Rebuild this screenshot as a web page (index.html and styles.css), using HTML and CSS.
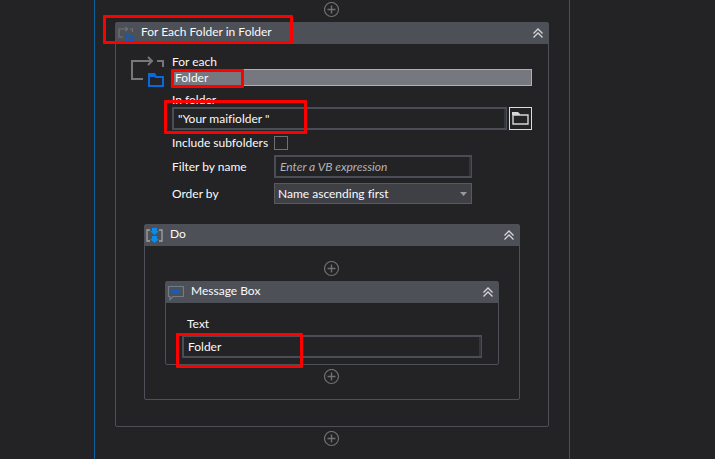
FILE: index.html
```html
<!DOCTYPE html>
<html lang="en">
<head>
  <meta charset="UTF-8" />
  <meta name="viewport" content="width=device-width, initial-scale=1.0"/>
  <title>For Each Folder in Folder</title>
  <link rel="stylesheet" href="styles.css">
</head>
<body>

  <!-- shared icons -->
  <svg class="sprite" aria-hidden="true">
    <symbol id="plus" viewBox="0 0 16 16">
      <circle cx="7.500" cy="7.500" r="7" fill="none" stroke="#707072" stroke-width="1.2"/>
      <path d="M7.500 3.500v8M3.500 7.500h8" stroke="#707072" stroke-width="1.4"/>
    </symbol>
    <symbol id="collapse" viewBox="0 0 10 10">
      <path d="M0.5 5.5L5 1l4.500 4.500M0.500 9.500L5 5l4.500 4.500" fill="none" stroke="#d4d5d8" stroke-width="1.3"/>
    </symbol>
    <symbol id="foreach" viewBox="0 0 33 32">
      <path d="M12 23H1V5h20M17 1l4 4-4 4M26 5h6v6" fill="none" stroke="#77777a" stroke-width="2"/>
      <path d="M18 30V18h5l2 3h7v9z" fill="none" stroke="#0a68dc" stroke-width="2"/>
      <path d="M17 17h7l2 4h-9z" fill="#0a68dc"/>
    </symbol>
  </svg>

  <main class="sequence">
    <button class="add" aria-label="Add activity"><svg><use href="#plus"/></svg></button>

    <section class="card">
      <header class="card-header marked">
        <svg class="icon" viewBox="0 0 17 17">
          <path d="M6 12H2V4h8M8.500 2l2 2-2 2M13 4h2.500v3" fill="none" stroke="#707276" stroke-width="1.200"/>
          <path d="M9 15.500v-5.500h2.500l1 1.500H16v4z" fill="none" stroke="#0a5cc4" stroke-width="1.400"/>
        </svg>
        <h1 class="title">For Each Folder in Folder</h1>
        <button class="collapse" aria-label="Collapse"><svg><use href="#collapse"/></svg></button>
        <span class="mark mark-title"></span>
      </header>

      <div class="settings">
        <svg class="big-icon"><use href="#foreach"/></svg>
        <form class="fields">
          <label for="item">For each</label>
          <div class="item-row marked">
            <input class="item" id="item" type="text" value="Folder">
            <span class="mark mark-item"></span>
          </div>

          <label class="folder-label" for="folder">In folder</label>
          <div class="folder-row marked">
            <input class="expression" id="folder" type="text" value='"Your maifiolder "'>
            <button class="browse" type="button" aria-label="Browse">
              <svg viewBox="0 0 17 13">
                <path d="M1 12V3h15v9z" fill="none" stroke="#d6d6d6" stroke-width="1.400"/>
                <path d="M0 0h6l2 2v1H0z" fill="#d6d6d6"/>
              </svg>
            </button>
            <span class="mark mark-folder"></span>
          </div>

          <div class="options">
            <label for="subfolders">Include subfolders</label>
            <input class="check" id="subfolders" type="checkbox">
            <label for="filter">Filter by name</label>
            <input class="expression" id="filter" type="text" placeholder="Enter a VB expression">
            <label for="order">Order by</label>
            <div class="select-wrap">
              <select class="order" id="order">
                <option>Name ascending first</option>
                <option>Name descending first</option>
              </select>
              <svg class="arrow" viewBox="0 0 7 4"><path d="M0 0h7L3.500 4z" fill="#9a9a9e"/></svg>
            </div>
          </div>
        </form>
      </div>

      <section class="card card-do">
        <header class="card-header">
          <svg class="icon" viewBox="0 0 17 17">
            <path d="M4 3H1v11h3M13 3h3v11h-3" fill="none" stroke="#a0a2a6" stroke-width="1.300"/>
            <path d="M6 1h5v3h2L8.500 8 4 4h2zM6 9h5v3h2l-4.500 4L4 12h2z" fill="#0c8ce9"/>
          </svg>
          <h2 class="title">Do</h2>
          <button class="collapse" aria-label="Collapse"><svg><use href="#collapse"/></svg></button>
        </header>
        <div class="do-body">
          <button class="add" aria-label="Add activity"><svg><use href="#plus"/></svg></button>

          <section class="card card-message">
            <header class="card-header">
              <svg class="icon" viewBox="0 0 17 17">
                <path d="M1.500 2.500h15v10H6l-3 3v-3H1.500z" fill="none" stroke="#6f7d88" stroke-width="1.200"/>
                <path d="M4 5h9v4H4z" fill="#1a5cb4"/>
              </svg>
              <h2 class="title">Message Box</h2>
              <button class="collapse" aria-label="Collapse"><svg><use href="#collapse"/></svg></button>
            </header>
            <div class="message-body">
              <label class="text-label" for="text">Text</label>
              <div class="text-row marked">
                <input class="expression" id="text" type="text" value="Folder">
                <span class="mark mark-text"></span>
              </div>
            </div>
          </section>

          <button class="add" aria-label="Add activity"><svg><use href="#plus"/></svg></button>
        </div>
      </section>
    </section>

    <button class="add" aria-label="Add activity"><svg><use href="#plus"/></svg></button>
  </main>

</body>
</html>
```
FILE: styles.css
```css
* {
  box-sizing: border-box;
}

body {
  margin: 0;
  background-color: #232325;
  color: #fafafa;
  font-family: 'Segoe UI', 'Lato', sans-serif;
  font-size: 12px;
  font-variant-ligatures: none;
  line-height: 15px;
}

input,
select,
button {
  margin: 0;
  color: inherit;
  font: inherit;
  font-variant-ligatures: none;
}

svg {
  display: block;
}

label {
  white-space: nowrap;
}

.sprite {
  display: none;
}

.sequence {
  display: flex;
  flex-direction: column;
  align-items: center;
  gap: 4px;
  min-height: 100vh;
  margin: 0 145px 0 94px;
  padding: 2px 20px;
  border-left: 1px solid #0b629f;
  border-right: 1px solid #0b629f;
}

.add {
  width: 16px;
  height: 16px;
  padding: 0;
  border: none;
  background: none;
  cursor: pointer;
}

.add svg {
  width: 16px;
  height: 16px;
}

.card {
  width: 100%;
  border: 1px solid #4d5057;
  border-radius: 2px;
}

.card-header {
  display: flex;
  align-items: center;
  height: 21px;
  padding: 0 5px 1px 1px;
  background-color: #4d5057;
}

.icon {
  flex: none;
  width: 17px;
  height: 17px;
}

.title {
  flex: 1;
  margin: 0 0 0 7px;
  padding-bottom: 3px;
  font-size: 12px;
  font-weight: normal;
}

.collapse {
  padding: 0;
  border: none;
  background: none;
  cursor: pointer;
}

.collapse svg {
  width: 10px;
  height: 10px;
}

.settings {
  display: flex;
  gap: 8px;
  padding: 10px 16px 20px 15px;
}

.big-icon {
  flex: none;
  width: 33px;
  height: 32px;
  margin-top: 2px;
}

.fields {
  flex: 1;
  display: flex;
  flex-direction: column;
}

.item-row,
.folder-row,
.text-row {
  display: flex;
  gap: 2px;
}

.item {
  width: 100%;
  height: 17px;
  padding: 0 2px;
  border: 1px solid #b0b0b4;
  background-color: #777780;
}

.folder-label {
  margin-top: 6px;
}

.expression {
  flex: 1;
  min-width: 0;
  height: 23px;
  padding: 0 4px;
  border: 2px solid #4a4d55;
  border-right-width: 1px;
  background-color: #232325;
  box-shadow: inset -2px 0 #34363b;
}

.expression::placeholder {
  color: #b4b4b4;
  font-style: italic;
}

.browse {
  display: flex;
  align-items: center;
  justify-content: center;
  width: 23px;
  height: 23px;
  padding: 0;
  border: 1px solid #dcdcde;
  background: none;
}

.browse svg {
  width: 17px;
  height: 13px;
}

.options {
  display: grid;
  grid-template-columns: 102px minmax(0, 198px);
  row-gap: 5px;
  align-items: center;
  margin-top: 5px;
}

.check {
  appearance: none;
  width: 14px;
  height: 14px;
  border: 1px solid #707072;
}

.select-wrap {
  position: relative;
}

.order {
  appearance: none;
  display: block;
  width: 100%;
  height: 21px;
  padding: 0 3px;
  border: 1px solid #5a5a5e;
  border-radius: 0;
  background-color: #3f3f46;
}

.arrow {
  position: absolute;
  top: 9px;
  right: 5px;
  width: 7px;
  height: 4px;
  pointer-events: none;
}

.card-do {
  width: auto;
  margin: 0 28px 26px;
}

.do-body {
  display: flex;
  flex-direction: column;
  align-items: center;
  gap: 4px;
  padding: 15px 20px 14px;
}

.message-body {
  padding: 13px 16px 6px;
}

.text-label {
  display: block;
  padding: 0 5px 4px;
}

/* red highlight boxes */
.marked {
  position: relative;
}

.mark {
  position: absolute;
  border: 3px solid #fe0000;
  border-radius: 1px;
  pointer-events: none;
}

.mark-title {
  top: -8px;
  left: -13px;
  width: 190px;
  height: 29px;
}

.mark-item {
  top: 0;
  left: -1px;
  width: 73px;
  height: 19px;
}

.mark-folder {
  top: -7px;
  left: -8px;
  width: 143px;
  height: 34px;
}

.mark-text {
  top: -2px;
  left: -6px;
  width: 127px;
  height: 35px;
}
```
